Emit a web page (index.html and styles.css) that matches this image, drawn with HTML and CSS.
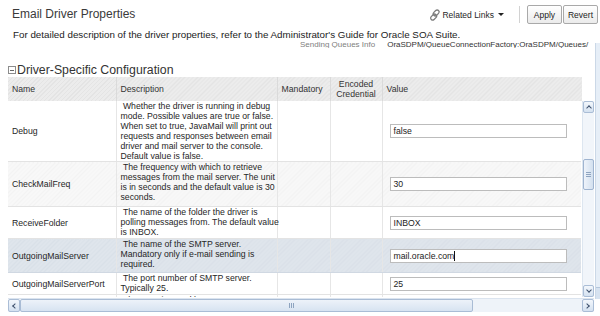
FILE: index.html
```html
<!DOCTYPE html>
<html lang="en">
<head>
    <meta charset="UTF-8">
    <title>Email Driver Properties</title>
    <link rel="stylesheet" href="styles.css">
</head>
<body>
    <div class="titlebar">
        <h1>Email Driver Properties</h1>
        <div class="actions">
            <a class="related" href="#">
                <svg width="12" height="12" viewBox="0 0 12 12">
                    <g fill="none" stroke="#7d7d7d" stroke-width="1.3">
                        <rect x="5.2" y="0.6" width="4" height="6.6" rx="2" transform="rotate(45 7.2 3.9)"/>
                        <rect x="2.6" y="4.8" width="4" height="6.6" rx="2" transform="rotate(45 4.6 8.1)"/>
                    </g>
                </svg>
                Related Links <span class="caret"></span>
            </a>
            <span class="sep"></span>
            <button class="btn">Apply</button>
            <button class="btn">Revert</button>
        </div>
    </div>

    <p class="intro">For detailed description of the driver properties, refer to the Administrator's Guide for Oracle SOA Suite.</p>

    <div class="scroll-area">
        <div class="content">
            <div class="peek">
                <span class="peek-label">Sending Queues Info</span>
                <span class="peek-value">OraSDPM/QueueConnectionFactory:OraSDPM/Queues/</span>
            </div>

            <h2 class="section"><span class="toggle"></span>Driver-Specific Configuration</h2>

            <div class="grid">
                <table class="tbl head">
                    <colgroup>
                        <col class="c-name"><col class="c-desc"><col class="c-mand"><col class="c-enc"><col class="c-val"><col class="c-fill">
                    </colgroup>
                    <tr>
                        <th>Name</th>
                        <th>Description</th>
                        <th>Mandatory</th>
                        <th class="center">Encoded<br>Credential</th>
                        <th>Value</th>
                        <th class="fill"></th>
                    </tr>
                </table>

                <div class="grid-body">
                    <div class="rows">
                        <table class="tbl">
                            <colgroup>
                                <col class="c-name"><col class="c-desc"><col class="c-mand"><col class="c-enc"><col class="c-val">
                            </colgroup>
                            <tr class="r-debug">
                                <td>Debug</td>
                                <td class="desc">&nbsp;Whether the driver is running in debug<br>mode. Possible values are true or false.<br>When set to true, JavaMail will print out<br>requests and responses between email<br>driver and mail server to the console.<br>Default value is false.</td>
                                <td></td>
                                <td></td>
                                <td class="val"><div class="field">false</div></td>
                            </tr>
                            <tr class="r-freq alt">
                                <td>CheckMailFreq</td>
                                <td class="desc">&nbsp;The frequency with which to retrieve<br>messages from the mail server. The unit<br>is in seconds and the default value is 30<br>seconds.</td>
                                <td></td>
                                <td></td>
                                <td class="val"><div class="field">30</div></td>
                            </tr>
                            <tr class="r-folder">
                                <td>ReceiveFolder</td>
                                <td class="desc">&nbsp;The name of the folder the driver is<br>polling messages from. The default value<br>is INBOX.</td>
                                <td></td>
                                <td></td>
                                <td class="val"><div class="field">INBOX</div></td>
                            </tr>
                            <tr class="r-server selected">
                                <td>OutgoingMailServer</td>
                                <td class="desc">&nbsp;The name of the SMTP server.<br>Mandatory only if e-mail sending is<br>required.</td>
                                <td></td>
                                <td></td>
                                <td class="val"><div class="field">mail.oracle.com<span class="text-caret"></span></div></td>
                            </tr>
                            <tr class="r-port">
                                <td>OutgoingMailServerPort</td>
                                <td class="desc">&nbsp;The port number of SMTP server.<br>Typically 25.</td>
                                <td></td>
                                <td></td>
                                <td class="val"><div class="field">25</div></td>
                            </tr>
                            <tr class="r-security">
                                <td>OutgoingMailServerSecurity</td>
                                <td class="desc">&nbsp;The security used by SMTP server.<br>Possible values are None, TLS and SSL.</td>
                                <td></td>
                                <td></td>
                                <td class="val"><div class="field">None</div></td>
                            </tr>
                        </table>
                    </div>
                    <div class="vscroll">
                        <div class="sb-btn"><span class="chev up"></span></div>
                        <div class="sb-track"><div class="sb-thumb v"><span class="grip v"></span></div></div>
                        <div class="sb-btn"><span class="chev down"></span></div>
                    </div>
                </div>

                <div class="hscroll">
                    <div class="sb-btn"><span class="chev left"></span></div>
                    <div class="sb-track h"><div class="sb-thumb h"><span class="grip h"></span></div></div>
                    <div class="sb-btn"><span class="chev right"></span></div>
                </div>
            </div>
        </div>
        <div class="outer-scroll"><div class="outer-btn"></div></div>
    </div>
</body>
</html>
```

FILE: styles.css
```css
body {
    margin: 0;
    font-family: "Liberation Sans", Arial, sans-serif;
    font-size: 8.7px;
    color: #262626;
    background: #fff;
}
.titlebar {
    display: flex;
    align-items: center;
    justify-content: space-between;
    height: 29px;
    padding: 0 2px 0 12px;
}
h1 {
    margin: 0 0 1px;
    font-size: 12px;
    font-weight: normal;
    color: #3a3a3a;
}
.actions {
    display: flex;
    align-items: center;
}
.related {
    display: flex;
    align-items: center;
    gap: 1px;
    color: #262626;
    text-decoration: none;
    font-size: 8.5px;
}
.caret {
    width: 0;
    height: 0;
    margin-left: 3px;
    border-left: 3px solid transparent;
    border-right: 3px solid transparent;
    border-top: 3px solid #222;
}
.sep {
    width: 1px;
    height: 17px;
    background: #d2d2d2;
    margin: 0 6px 0 15px;
}
.btn {
    width: 35px;
    height: 19px;
    padding: 0;
    margin-left: 1px;
    font-family: "Liberation Sans", Arial, sans-serif;
    font-size: 8.5px;
    color: #222;
    border: 1px solid #a9a9a9;
    border-radius: 2px;
    background: linear-gradient(#ffffff, #ebebeb);
}
.intro {
    margin: 0;
    padding-left: 13px;
    font-size: 9.8px;
    line-height: 12px;
    color: #222;
}
.scroll-area {
    display: flex;
    padding-left: 8px;
}
.content {
    width: 586px;
}
.peek {
    display: flex;
    align-items: flex-end;
    gap: 12px;
    height: 7px;
    overflow: hidden;
    padding-left: 292px;
    white-space: nowrap;
    font-size: 8px;
    line-height: 10px;
}
.peek span {
    margin-bottom: -2px;
}
.peek-label {
    color: #808080;
}
.peek-value {
    color: #333;
}
.outer-scroll {
    width: 5px;
    height: 256px;
    margin: 2px 0 0 1px;
    display: flex;
    flex-direction: column;
    justify-content: flex-end;
    background: #e6eef7;
    border-left: 1px solid #cbd8e7;
}
.outer-btn {
    height: 11px;
    border-top: 1px solid #b4c6dc;
    background: #d6e2f0;
}
.section {
    display: flex;
    align-items: center;
    margin: 15px 0 0;
    height: 14px;
    font-size: 12.3px;
    font-weight: normal;
    color: #333;
}
.toggle {
    position: relative;
    width: 6px;
    height: 6px;
    margin-right: 1px;
    border: 1px solid #8c8c8c;
}
.toggle::after {
    content: "";
    position: absolute;
    left: 1px;
    right: 1px;
    top: 2.5px;
    height: 1px;
    background: #666;
}
.grid {
    width: 586px;
}
.tbl {
    table-layout: fixed;
    border-collapse: collapse;
    width: 574px;
}
.tbl.head {
    width: 586px;
}
.c-name { width: 108px; }
.c-desc { width: 161px; }
.c-mand { width: 53px; }
.c-enc { width: 52px; }
.c-val { width: 200px; }
.c-fill { width: 12px; }
th {
    height: 24px;
    padding: 0 4px;
    font-weight: normal;
    text-align: left;
    line-height: 10px;
    color: #333;
    border-left: 1px solid #dadada;
    background: repeating-linear-gradient(135deg, #e4e4e4 0 1px, #ececec 1px 3px);
}
th:first-child {
    border-left: none;
}
th.center {
    text-align: center;
}
th.fill {
    background: #fff;
    border-left: none;
}
.grid-body {
    display: flex;
    height: 196px;
}
.rows {
    width: 574px;
    overflow: hidden;
}
td {
    padding: 0 4px;
    line-height: 10px;
    vertical-align: middle;
    white-space: nowrap;
    border-left: 1px solid #e6e6e6;
    border-bottom: 1px solid #e3e3e3;
}
td:first-child {
    border-left: none;
}
td.desc {
    vertical-align: top;
}
td.val {
    padding-left: 7px;
}
.r-debug td { height: 58px; }
.r-freq td { height: 44px; }
.r-folder td { height: 31px; }
.r-server td { height: 33px; }
.r-port td { height: 21px; }
.r-security td { height: 22px; }
.alt td {
    background: repeating-linear-gradient(135deg, #f3f3f3 0 1px, #f8f8f8 1px 3px);
}
.selected td {
    background: repeating-linear-gradient(135deg, #d9e0e8 0 1px, #dfe5ec 1px 3px);
    border-bottom-color: #d0d8e2;
}
.field {
    width: 172px;
    height: 12px;
    padding-left: 3px;
    line-height: 12px;
    border: 1px solid #bcbcbc;
    background: #fff;
    color: #222;
}
.text-caret {
    display: inline-block;
    width: 1px;
    height: 10px;
    vertical-align: -2px;
    background: #111;
}
.vscroll {
    width: 11px;
    margin-left: 1px;
    display: flex;
    flex-direction: column;
    background: #f1f5fa;
    border-left: 1px solid #dde6f0;
}
.sb-btn {
    display: flex;
    align-items: center;
    justify-content: center;
    width: 11px;
    height: 12px;
    box-sizing: border-box;
    border: 1px solid #aabdd6;
    border-radius: 2px;
    background: linear-gradient(#f3f7fc, #d4e1f0);
}
.sb-track {
    flex: 1;
}
.sb-thumb.v {
    display: flex;
    align-items: center;
    justify-content: center;
    height: 31px;
    margin-top: 46px;
    box-sizing: border-box;
    border: 1px solid #9fb4d0;
    border-radius: 2px;
    background: linear-gradient(90deg, #eef3fa, #d3e0ef);
}
.grip.v {
    width: 5px;
    height: 5px;
    border-top: 1px solid #8ea4c0;
    border-bottom: 1px solid #8ea4c0;
    box-sizing: border-box;
    background: linear-gradient(#8ea4c0, #8ea4c0) center / 100% 1px no-repeat;
}
.chev {
    width: 3px;
    height: 3px;
    border-left: 1.5px solid #3c4f6b;
    border-top: 1.5px solid #3c4f6b;
}
.chev.up { transform: rotate(45deg); margin-top: 2px; }
.chev.down { transform: rotate(225deg); margin-bottom: 2px; }
.chev.left { transform: rotate(-45deg); margin-left: 2px; }
.chev.right { transform: rotate(135deg); margin-right: 2px; }
.hscroll {
    display: flex;
    height: 13px;
    margin-top: 1px;
    background: #eef3f9;
    border-top: 1px solid #dbe4ef;
}
.hscroll .sb-btn {
    width: 12px;
    height: 13px;
}
.sb-track.h {
    display: flex;
}
.sb-thumb.h {
    display: flex;
    align-items: center;
    justify-content: center;
    width: 453px;
    box-sizing: border-box;
    padding-left: 90px;
    border: 1px solid #a9bcd5;
    border-radius: 2px;
    background: linear-gradient(#edf2f9, #d7e3f1);
}
.grip.h {
    width: 5px;
    height: 5px;
    border-left: 1px solid #8ea4c0;
    border-right: 1px solid #8ea4c0;
    box-sizing: border-box;
    background: linear-gradient(#8ea4c0, #8ea4c0) center / 1px 100% no-repeat;
}
```
